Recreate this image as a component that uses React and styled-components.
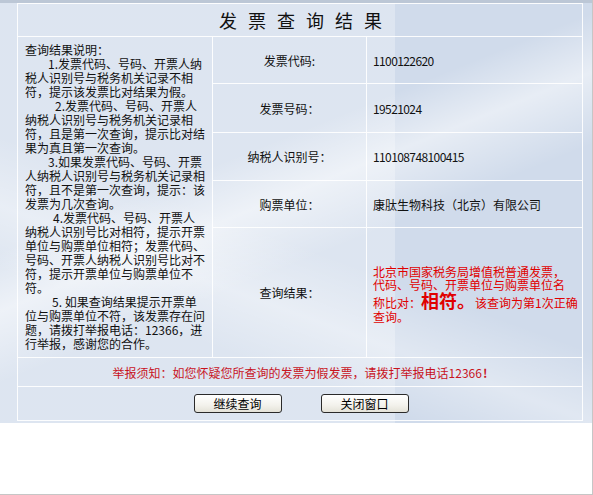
import React from "react";
import styled, { createGlobalStyle } from "styled-components";

const notes = [
  [0, "查询结果说明："],
  [23, "1.发票代码、号码、开票人纳"],
  [0, "税人识别号与税务机关记录不相"],
  [0, "符，提示该发票比对结果为假。"],
  [30, "2.发票代码、号码、开票人"],
  [0, "纳税人识别号与税务机关记录相"],
  [0, "符，且是第一次查询，提示比对结"],
  [0, "果为真且第一次查询。"],
  [23, "3.如果发票代码、号码、开票"],
  [0, "人纳税人识别号与税务机关记录相"],
  [0, "符，且不是第一次查询，提示：该"],
  [0, "发票为几次查询。"],
  [28, "4.发票代码、号码、开票人"],
  [0, "纳税人识别号比对相符，提示开票"],
  [0, "单位与购票单位相符；发票代码、"],
  [0, "号码、开票人纳税人识别号比对不"],
  [0, "符，提示开票单位与购票单位不"],
  [0, "符。"],
  [27, "5. 如果查询结果提示开票单"],
  [0, "位与购票单位不符，该发票存在问"],
  [0, "题，请拨打举报电话：12366，进"],
  [0, "行举报，感谢您的合作。"],
];

const fields = [
  { label: "发票代码:", value: "1100122620", digits: true },
  { label: "发票号码：", value: "19521024", digits: true },
  { label: "纳税人识别号：", value: "110108748100415", digits: true },
  { label: "购票单位：", value: "康肽生物科技（北京）有限公司" },
];

const App = () => {
  return (
    <Page>
      <GlobalStyle />
      <Backdrop>
        <Board>
          <Title>发票查询结果</Title>
          <Notes>
            {notes.map(([indent, text], i) => (
              <NoteLine key={i} $indent={indent}>
                {text}
              </NoteLine>
            ))}
          </Notes>
          {fields.map((f) => (
            <React.Fragment key={f.label}>
              <Label>{f.label}</Label>
              <Value $digits={f.digits}>{f.value}</Value>
            </React.Fragment>
          ))}
          <Label $last>查询结果：</Label>
          <Value $last>
            <Result>
              北京市国家税务局增值税普通发票，
              <br />
              代码、号码、开票单位与购票单位名
              <br />
              称比对：<Strong>相符。</Strong>该查询为第1次正确
              <br />
              查询。
            </Result>
          </Value>
          <Notice>
            举报须知：如您怀疑您所查询的发票为假发票，请拨打举报电话12366
            <b>!</b>
          </Notice>
          <Actions>
            <Button type="button">继续查询</Button>
            <Button type="button">关闭窗口</Button>
          </Actions>
        </Board>
      </Backdrop>
    </Page>
  );
};

const GlobalStyle = createGlobalStyle`
  html, body {
    margin: 0;
    padding: 0;
    background: #fff;
  }
  body {
    font-family: "Noto Sans CJK SC", "Noto Sans", sans-serif;
    font-size: 12px;
    color: #000;
  }
`;

const Page = styled.div`
  width: 593px;
  height: 495px;
  box-sizing: border-box;
  border-right: 1px solid #c6c6c6;
  border-bottom: 1px solid #c6c6c6;
  background: #fff;
`;

const Backdrop = styled.div`
  padding: 3px 0 2px 17px;
  background:
    linear-gradient(#bcc7d6 0 3px, transparent 3px),
    linear-gradient(158deg, rgba(255, 255, 255, 0) 38%, rgba(255, 255, 255, 0.5) 47%, rgba(255, 255, 255, 0) 58%),
    linear-gradient(200deg, rgba(255, 255, 255, 0) 55%, rgba(255, 255, 255, 0.35) 66%, rgba(255, 255, 255, 0) 76%),
    linear-gradient(90deg, rgba(255, 255, 255, 0.28) 0 395px, rgba(255, 255, 255, 0) 395px),
    #d0dbeb;
`;

const Board = styled.div`
  width: 566px;
  box-sizing: border-box;
  border: 1px solid rgba(255, 255, 255, 0.9);
  display: grid;
  grid-template-columns: 195px 154px 1fr;
  grid-template-rows: 33px 47px 49px 48px 47px 130px 29px 33px;
`;

const Cell = styled.div`
  box-sizing: border-box;
  border-bottom: 1px solid rgba(255, 255, 255, 0.9);
  border-right: 1px solid rgba(255, 255, 255, 0.9);
`;

const Title = styled(Cell)`
  grid-column: 1 / 4;
  border-right: none;
  display: flex;
  align-items: center;
  justify-content: center;
  padding-left: 12px;
  font-size: 18px;
  letter-spacing: 11px;
  color: #111;
`;

const Notes = styled(Cell)`
  grid-column: 1;
  grid-row: 2 / 7;
  padding: 6px 4px 0 7px;
  line-height: 14px;
  color: #111;
`;

const NoteLine = styled.div`
  padding-left: ${(p) => p.$indent}px;
  white-space: nowrap;
`;

const Label = styled(Cell)`
  grid-column: 2;
  display: flex;
  align-items: center;
  justify-content: center;
  color: #111;
`;

const Value = styled(Cell)`
  grid-column: 3;
  border-right: none;
  display: flex;
  align-items: center;
  padding-left: 6px;
  color: #111;
  letter-spacing: ${(p) => (p.$digits ? "-0.6px" : "0")};
`;

const Result = styled.div`
  color: #e00000;
  line-height: 13px;
  white-space: nowrap;
  margin-top: 2px;
`;

const Strong = styled.strong`
  font-size: 18px;
  line-height: 19px;
  font-weight: bold;
`;

const Notice = styled(Cell)`
  grid-column: 1 / 4;
  border-right: none;
  display: flex;
  align-items: center;
  justify-content: center;
  color: #c8141e;

  b {
    font-weight: bold;
    margin-left: 1px;
  }
`;

const Actions = styled.div`
  grid-column: 1 / 4;
  display: flex;
  align-items: center;
  justify-content: center;
  gap: 39px;
  padding-left: 2px;
`;

const Button = styled.button`
  width: 88px;
  height: 19px;
  padding: 0;
  border: 1px solid #2a2a2a;
  border-radius: 3px;
  background: linear-gradient(#ffffff, #f3f2ec 60%, #e4e2d8);
  font-family: "Noto Sans CJK SC", sans-serif;
  font-size: 12px;
  line-height: 17px;
  color: #000;
  cursor: pointer;
`;

export default App;
